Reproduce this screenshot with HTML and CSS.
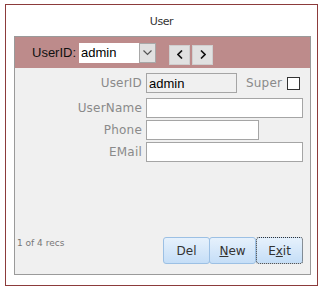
FILE: index.html
```html
<!DOCTYPE html>
<html>
<head>
    <title>User</title>
    <link rel="stylesheet" href="styles.css">
</head>
<body>
    <div class="frame">
        <div class="title">User</div>
        <div class="panel">
            <!-- record picker -->
            <div class="panel-head">
                <span class="head-label">UserID:</span>
                <div class="combo">
                    <span class="combo-value">admin</span>
                    <span class="combo-btn">
                        <svg width="9" height="6" viewBox="0 0 9 6"><polyline points="0.5,0.5 4.5,4.5 8.5,0.5" fill="none" stroke="#555" stroke-width="1.2"/></svg>
                    </span>
                </div>
                <div class="nav">
                    <button class="nav-btn">
                        <svg width="6" height="9" viewBox="0 0 6 9"><polyline points="5,0.5 1,4.5 5,8.5" fill="none" stroke="#111" stroke-width="1.6"/></svg>
                    </button>
                    <button class="nav-btn">
                        <svg width="6" height="9" viewBox="0 0 6 9"><polyline points="1,0.5 5,4.5 1,8.5" fill="none" stroke="#111" stroke-width="1.6"/></svg>
                    </button>
                </div>
            </div>

            <!-- fields -->
            <div class="panel-body">
                <div class="row row-first">
                    <label class="field-label">UserID</label>
                    <div class="field-line">
                        <input type="text" class="field field-id" value="admin" disabled>
                        <span class="super-label">Super</span>
                        <span class="check"></span>
                    </div>
                </div>
                <div class="row">
                    <label class="field-label">UserName</label>
                    <input type="text" class="field field-wide">
                </div>
                <div class="row">
                    <label class="field-label">Phone</label>
                    <input type="text" class="field field-phone">
                </div>
                <div class="row">
                    <label class="field-label">EMail</label>
                    <input type="text" class="field field-wide">
                </div>
            </div>

            <div class="panel-foot">
                <span class="recs">1 of 4 recs</span>
                <div class="actions">
                    <button class="act">Del</button>
                    <button class="act act-new"><u>N</u>ew</button>
                    <button class="act act-exit">E<u>x</u>it</button>
                </div>
            </div>
        </div>
    </div>
</body>
</html>
```
FILE: styles.css
```css
body {
    margin: 0;
    background: #fff;
    font-family: "DejaVu Sans", sans-serif;
}
.frame {
    box-sizing: border-box;
    width: 313px;
    height: 282px;
    margin: 4px 0 0 5px;
    border: 1px solid #8c3b3b;
}
.title {
    box-sizing: border-box;
    height: 31px;
    padding-top: 10px;
    font-size: 11px;
    line-height: 14px;
    letter-spacing: -0.4px;
    color: #333;
    text-align: center;
}
.panel {
    box-sizing: border-box;
    width: 297px;
    height: 239px;
    margin-left: 8px;
    border: 1px solid #9a9a9a;
    background: #f0f0f0;
    display: flex;
    flex-direction: column;
}
.panel-head {
    height: 31px;
    background: #bd8b8b;
    display: flex;
    align-items: center;
    padding-left: 17px;
}
.head-label {
    font-family: "Liberation Sans", Arial, sans-serif;
    font-size: 13px;
    color: #111;
    margin-right: 3px;
}
.combo {
    display: flex;
    height: 20px;
}
.combo-value {
    box-sizing: border-box;
    width: 60px;
    height: 20px;
    background: #fff;
    padding-left: 2px;
    font-family: "Liberation Sans", Arial, sans-serif;
    font-size: 13px;
    line-height: 20px;
    color: #000;
}
.combo-btn {
    box-sizing: border-box;
    width: 17px;
    height: 20px;
    background: #e1e1e1;
    border: 1px solid #a8a8a8;
    display: flex;
    align-items: center;
    justify-content: center;
}
.nav {
    display: flex;
    gap: 2px;
    margin-left: 13px;
    margin-top: 4px;
}
.nav-btn {
    box-sizing: border-box;
    width: 21px;
    height: 20px;
    padding: 0;
    background: #e1e1e1;
    border: 1px solid #cfcfcf;
    display: flex;
    align-items: center;
    justify-content: center;
}
.panel-body {
    padding-top: 5px;
}
.row {
    display: flex;
    align-items: center;
    height: 20px;
    margin-bottom: 2px;
}
.row-first {
    margin-bottom: 5px;
}
.field-label {
    width: 127px;
    margin-right: 4px;
    text-align: right;
    font-size: 12px;
    letter-spacing: 0.2px;
    color: #8a8a8a;
}
.field-line {
    display: flex;
    align-items: center;
}
.field {
    box-sizing: border-box;
    height: 20px;
    margin: 0;
    padding: 0 2px;
    border: 1px solid #a5a5a5;
    background: #fff;
    font-family: "Liberation Sans", Arial, sans-serif;
    font-size: 13px;
    color: #000;
}
.field-id {
    width: 91px;
    background: #f0f0f0;
}
.field-wide {
    width: 157px;
}
.field-phone {
    width: 113px;
}
.super-label {
    margin-left: 9px;
    font-size: 12px;
    letter-spacing: 0.2px;
    color: #8a8a8a;
}
.check {
    box-sizing: border-box;
    width: 13px;
    height: 13px;
    margin-left: 5px;
    background: #fff;
    border: 1px solid #333;
}
.panel-foot {
    margin-top: auto;
    display: flex;
    align-items: flex-end;
    justify-content: space-between;
    padding: 0 7px 10px 2px;
}
.recs {
    font-size: 9px;
    line-height: 11px;
    color: #777;
    margin-bottom: 15px;
}
.actions {
    display: flex;
}
.act {
    box-sizing: border-box;
    width: 47px;
    height: 27px;
    padding: 0;
    background: linear-gradient(#e6f1fc, #c5def7);
    border: 1px solid #9cc0e4;
    border-radius: 3px;
    font-family: "DejaVu Sans", sans-serif;
    font-size: 12px;
    color: #333;
}
.act-new {
    margin-left: -1px;
}
.act-exit {
    border: 1px dotted #333;
}
```
